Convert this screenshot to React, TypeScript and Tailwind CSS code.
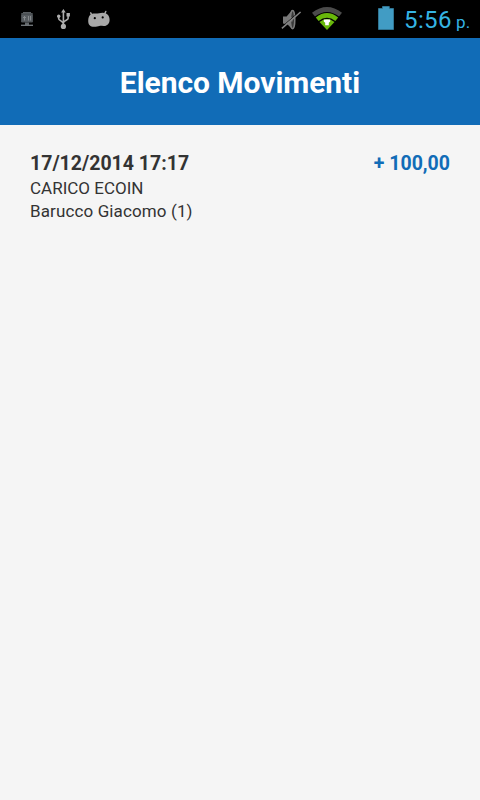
const movements = [
  {
    date: '17/12/2014 17:17',
    amount: '+ 100,00',
    type: 'CARICO ECOIN',
    person: 'Barucco Giacomo (1)',
  },
];

function StorageIcon() {
  return (
    <svg viewBox="20 11 14 16" className="w-[14px] h-4" fill="none">
      <path d="M23 12.5h8" stroke="#5a5f63" strokeWidth="1" />
      <path d="M21.3 13.6h11.4" stroke="#5a5f63" strokeWidth="1" />
      <path d="M21.5 14.5h11v7.5h-11z" fill="#575c60" stroke="#4a4f53" strokeWidth="1" />
      <path d="M24.5 16v4.5M23 17.5h3M28.5 16v4.5M30.5 16v4.5" stroke="#85898c" strokeWidth="1" />
      <path d="M27 22.5V25" stroke="#62676b" strokeWidth="4" />
      <path d="M21 25.3h12" stroke="#777c80" strokeWidth="1.3" />
    </svg>
  );
}

function UsbIcon() {
  return (
    <svg viewBox="56 8 15 22" className="w-[15px] h-[22px]" fill="none">
      <path d="M63.4 11v15M58.7 16.5v2.3c0 1.6 4.7 2.4 4.7 5.2M68.1 15.5v3c0 1.7-4.7 1.8-4.7 4.5" stroke="#adadad" strokeWidth="1.6" />
      <path d="M63.4 8.9l2.3 3.6h-4.6zM66.5 13h3.4v3.4h-3.4z" fill="#adadad" />
      <circle cx="58.7" cy="16.3" r="1.7" fill="#adadad" />
      <circle cx="63.4" cy="26.4" r="2.6" fill="#adadad" />
    </svg>
  );
}

function AndroidIcon() {
  return (
    <svg viewBox="87 9 24 19" className="w-6 h-[19px]" fill="#a8a8a8">
      <path d="M91.9 15 90.7 12.8M104.4 14.4l1.4-2.9" stroke="#a8a8a8" strokeWidth="1.5" strokeLinecap="round" />
      <path d="M88.2 21c0-3 1-5.5 2.9-6.9 1.5-1 2.9-.5 4.8-.5 2.3 0 4.1-.8 6.7-.8 4.6 0 7 2.9 7 6.9s-2.6 6.3-6 6.3c-2 0-2.8-.3-4.2 0-1.7.4-2.8.8-5.3.8-3.9 0-5.9-2.2-5.9-5.8z" />
      <circle cx="94.8" cy="18.2" r="1.1" fill="#000" />
      <circle cx="102.7" cy="17.4" r="1.1" fill="#000" />
    </svg>
  );
}

function MutedIcon() {
  return (
    <svg viewBox="280 8 22 24" className="w-[22px] h-6">
      <path d="M283 16.5h3.6L292 10.3V29l-4.4-4.4-4.6-1.2z" fill="#787878" />
      <ellipse cx="292.6" cy="19.6" rx="2.2" ry="9.2" fill="#3a3a3a" stroke="#7b7b7b" strokeWidth="1.5" />
      <path d="M289.5 17.5h3v4h-3z" fill="#808080" />
      <path d="m281.5 27.2 18.5-16.1" stroke="#000" strokeWidth=".8" />
      <path d="m281.9 28.4 18.7-16.4" stroke="#848484" strokeWidth="1.5" />
    </svg>
  );
}

function WifiIcon() {
  return (
    <svg viewBox="311 6 32 25" className="w-8 h-[25px]">
      <path d="M312 12.8Q327 1.2 342 12.8l-3 3.6q-12-9-24 0z" fill="#4b4b4b" />
      <path d="M315.8 17.4q11.2-8.8 22.4 0l-2.8 3.5q-8.4-6.2-16.8 0z" fill="#68b80a" />
      <path d="M319.5 21.9q7.5-5.8 15 0L327 30z" fill="#68b80a" />
      <path d="M323.8 19.4h6.4v2.2l-1.4 1.2v2.5h-3.6v-2.5l-1.4-1.2z" fill="#fff" />
    </svg>
  );
}

function BatteryIcon() {
  return (
    <svg viewBox="378 6 16 24" className="w-4 h-6">
      <path d="M378.5 8.5h4v-2h6.8v2h4.2v21h-15z" fill="#419cc4" stroke="#357f9f" strokeWidth=".8" />
    </svg>
  );
}

function StatusBar() {
  return (
    <div className="flex h-[38px] justify-between bg-black pl-5 pr-[10px]">
      <div className="flex items-start">
        <div className="pt-[11px]">
          <StorageIcon />
        </div>
        <div className="ml-[22px] pt-2">
          <UsbIcon />
        </div>
        <div className="ml-4 pt-[9px]">
          <AndroidIcon />
        </div>
      </div>
      <div className="flex items-start">
        <div className="pt-2">
          <MutedIcon />
        </div>
        <div className="ml-[9px] pt-1.5">
          <WifiIcon />
        </div>
        <div className="ml-[35px] pt-1.5">
          <BatteryIcon />
        </div>
        <div className="ml-[10px] flex w-[66px] items-baseline whitespace-nowrap text-[#35b4e3]">
          <span className="text-2xl leading-[41px] tracking-[0.4px]">5:56</span>
          <span className="ml-1 text-[17px] tracking-[0.3px]">p.</span>
        </div>
      </div>
    </div>
  );
}

export default function App() {
  return (
    <div className="min-h-screen w-full bg-[#f5f5f5] font-['Roboto',sans-serif] text-[#333]">
      <StatusBar />

      <header className="flex h-[87px] items-center justify-center bg-[#116cb7] pt-0.5">
        <h1 className="text-[30px] font-bold leading-9 tracking-[-0.05px] text-white">Elenco Movimenti</h1>
      </header>

      <ul className="px-[30px] pt-[27px]">
        {movements.map((movement, idx) => (
          <li key={idx}>
            <div className="flex justify-between text-[19.5px] font-bold leading-6">
              <span>{movement.date}</span>
              <span className="text-[#116cb7]">{movement.amount}</span>
            </div>
            <p className="pt-px text-[17px] leading-[23px]">{movement.type}</p>
            <p className="text-[17px] leading-[23px] tracking-[0.12px]">{movement.person}</p>
          </li>
        ))}
      </ul>
    </div>
  );
}
